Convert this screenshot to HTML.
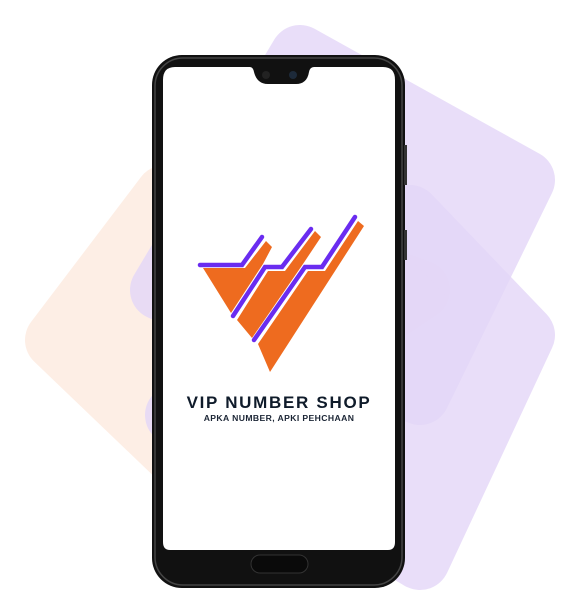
<!DOCTYPE html>
<html><head><meta charset="utf-8"><style>
html,body{margin:0;padding:0;background:#fff;width:577px;height:608px;overflow:hidden;position:relative;font-family:"Liberation Sans",sans-serif}
svg{position:absolute;left:0;top:0}
.t1{position:absolute;left:163px;width:232px;top:393px;text-align:center;font-weight:900;font-size:17px;letter-spacing:1.7px;color:#0f1b2a}
.t2{position:absolute;left:163px;width:232px;top:413px;text-align:center;font-weight:bold;font-size:8.6px;letter-spacing:0.4px;color:#1b2535}
</style></head><body>
<svg width="577" height="608" viewBox="0 0 577 608">
 <g stroke-linejoin="round" stroke-width="60">
  <polygon points="55,340 165,195 420,290 175,455" fill="#fdeee5" stroke="#fdeee5"/>
  <polygon points="300,55 525,180 420,395 160,290" fill="#e4d7f8" stroke="#e4d7f8" opacity="0.8"/>
  <polygon points="175,415 410,215 525,335 420,560" fill="#e4d7f8" stroke="#e4d7f8" opacity="0.8"/>
 </g>
 <rect x="152" y="55" width="253" height="533" rx="30" fill="#111"/>
 <rect x="155" y="58" width="247" height="527" rx="28" fill="none" stroke="#444" stroke-width="1.5"/>
 <rect x="404" y="145" width="3" height="40" fill="#333"/>
 <rect x="404" y="230" width="3" height="30" fill="#333"/>
 <path d="M175,67 H250 Q253,67 254,72 Q257,84 268,84 H296 Q307,84 309,72 Q310,67 314,67 H383 Q395,67 395,80 V542 Q395,550 388,550 H170 Q163,550 163,542 V80 Q163,67 175,67 Z" fill="#fff"/>
 <circle cx="266" cy="75" r="4" fill="#222"/>
 <circle cx="293" cy="75" r="4" fill="#1d2a3a"/>
 <rect x="251" y="555" width="57" height="18" rx="9" fill="#0a0a0a" stroke="#333" stroke-width="1"/>
 <!-- logo -->
 <polygon points="203,268 245,268 266,241 272,247 263,264 231,313" fill="#ee6b1f"/>
 <polygon points="237,320 268,271 285,271 315,231 321,237 303,264 252,338" fill="#ee6b1f"/>
 <polygon points="258,344 308,271 325,271 358,221 364,226 270,372" fill="#ee6b1f"/>
 <g fill="none" stroke="#6a2cf0" stroke-width="4.5" stroke-linecap="round" stroke-linejoin="miter">
  <polyline points="200,265 242,265 262,237"/>
  <polyline points="233,316 265,267 282,267 311,229"/>
  <polyline points="254,340 305,267 322,267 355,217"/>
 </g>
</svg>
<div class="t1">VIP NUMBER SHOP</div>
<div class="t2">APKA NUMBER, APKI PEHCHAAN</div>
</body></html>
